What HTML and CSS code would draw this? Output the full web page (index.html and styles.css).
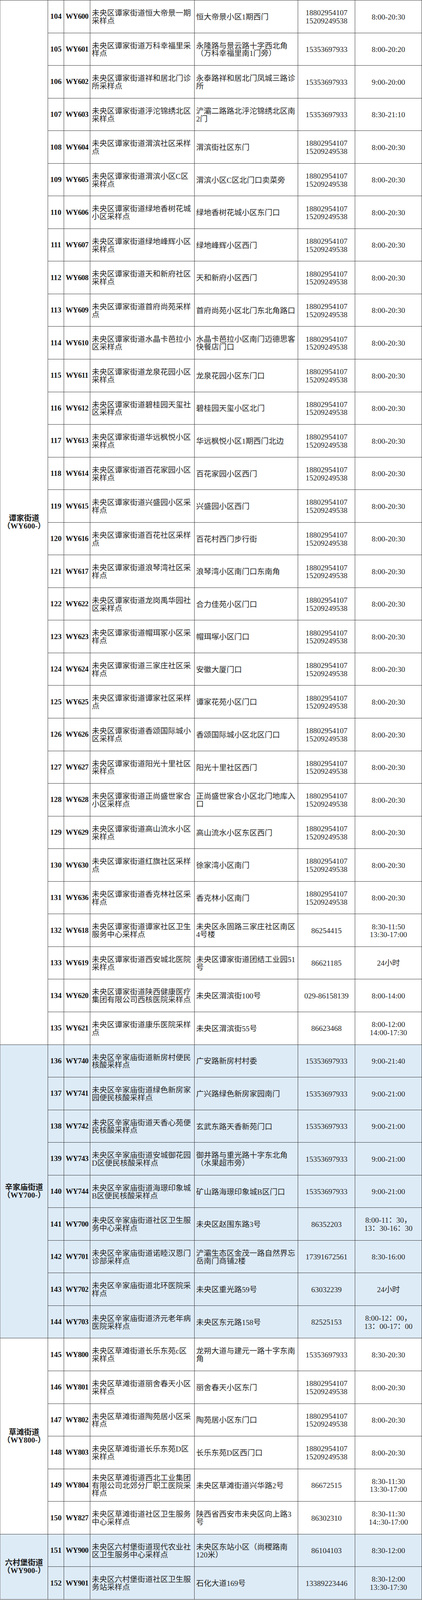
FILE: index.html
```html
<!DOCTYPE html>
<html lang="zh-CN">
<head>
<meta charset="utf-8">
<meta name="viewport" content="width=device-width, initial-scale=1">
<title>未央区核酸采样点</title>
<link rel="stylesheet" href="styles.css">
</head>
<body>
<div class="sheet">
<div class="grp">
<div class="street s32">谭家街道<br>（WY600-）</div>
<div class="row"><div class="no">104</div><div class="code">WY600</div><div class="txt">未央区谭家街道恒大帝景一期采样点</div><div class="txt">恒大帝景小区1期西门</div><div class="tel">18802954107<br>15209249538</div><div class="time">8:00-20:30</div></div>
<div class="row"><div class="no">105</div><div class="code">WY601</div><div class="txt">未央区谭家街道万科幸福里采样点</div><div class="txt">永隆路与景云路十字西北角（万科幸福里南1门旁）</div><div class="tel">15353697933</div><div class="time">8:00-20:20</div></div>
<div class="row"><div class="no">106</div><div class="code">WY602</div><div class="txt">未央区谭家街道祥和居北门诊所采样点</div><div class="txt">永泰路祥和居北门凤城三路诊所</div><div class="tel">15353697933</div><div class="time">9:00-20:00</div></div>
<div class="row"><div class="no">107</div><div class="code">WY603</div><div class="txt">未央区谭家街道泘沱锦绣北区采样点</div><div class="txt">浐灞二路路北泘沱锦绣北区南2门</div><div class="tel">15353697933</div><div class="time">8:30-21:10</div></div>
<div class="row"><div class="no">108</div><div class="code">WY604</div><div class="txt">未央区谭家街道渭滨社区采样点</div><div class="txt">渭滨街社区东门</div><div class="tel">18802954107<br>15209249538</div><div class="time">8:00-20:30</div></div>
<div class="row"><div class="no">109</div><div class="code">WY605</div><div class="txt">未央区谭家街道渭滨小区C区采样点</div><div class="txt">渭滨小区C区北门口卖菜旁</div><div class="tel">18802954107<br>15209249538</div><div class="time">8:00-20:30</div></div>
<div class="row"><div class="no">110</div><div class="code">WY606</div><div class="txt">未央区谭家街道绿地香树花城小区采样点</div><div class="txt">绿地香树花城小区东门口</div><div class="tel">18802954107<br>15209249538</div><div class="time">8:00-20:30</div></div>
<div class="row"><div class="no">111</div><div class="code">WY607</div><div class="txt">未央区谭家街道绿地峰辉小区采样点</div><div class="txt">绿地峰辉小区西门</div><div class="tel">18802954107<br>15209249538</div><div class="time">8:00-20:30</div></div>
<div class="row"><div class="no">112</div><div class="code">WY608</div><div class="txt">未央区谭家街道天和新府社区采样点</div><div class="txt">天和新府小区西门</div><div class="tel">18802954107<br>15209249538</div><div class="time">8:00-20:30</div></div>
<div class="row"><div class="no">113</div><div class="code">WY609</div><div class="txt">未央区谭家街道首府尚苑采样点</div><div class="txt">首府尚苑小区北门东北角路口</div><div class="tel">18802954107<br>15209249538</div><div class="time">8:00-20:30</div></div>
<div class="row"><div class="no">114</div><div class="code">WY610</div><div class="txt">未央区谭家街道水晶卡芭拉小区采样点</div><div class="txt">水晶卡芭拉小区南门迈德思客快餐店门口</div><div class="tel">18802954107<br>15209249538</div><div class="time">8:00-20:30</div></div>
<div class="row"><div class="no">115</div><div class="code">WY611</div><div class="txt">未央区谭家街道龙泉花园小区采样点</div><div class="txt">龙泉花园小区东门口</div><div class="tel">18802954107<br>15209249538</div><div class="time">8:00-20:30</div></div>
<div class="row"><div class="no">116</div><div class="code">WY612</div><div class="txt">未央区谭家街道碧桂园天玺社区采样点</div><div class="txt">碧桂园天玺小区北门</div><div class="tel">18802954107<br>15209249538</div><div class="time">8:00-20:30</div></div>
<div class="row"><div class="no">117</div><div class="code">WY613</div><div class="txt">未央区谭家街道华远枫悦小区采样点</div><div class="txt">华远枫悦小区1期西门北边</div><div class="tel">18802954107<br>15209249538</div><div class="time">8:00-20:30</div></div>
<div class="row"><div class="no">118</div><div class="code">WY614</div><div class="txt">未央区谭家街道百花家园小区采样点</div><div class="txt">百花家园小区西门</div><div class="tel">18802954107<br>15209249538</div><div class="time">8:00-20:30</div></div>
<div class="row"><div class="no">119</div><div class="code">WY615</div><div class="txt">未央区谭家街道兴盛园小区采样点</div><div class="txt">兴盛园小区西门</div><div class="tel">18802954107<br>15209249538</div><div class="time">8:00-20:30</div></div>
<div class="row"><div class="no">120</div><div class="code">WY616</div><div class="txt">未央区谭家街道百花社区采样点</div><div class="txt">百花村西门步行街</div><div class="tel">18802954107<br>15209249538</div><div class="time">8:00-20:30</div></div>
<div class="row"><div class="no">121</div><div class="code">WY617</div><div class="txt">未央区谭家街道浪琴湾社区采样点</div><div class="txt">浪琴湾小区南门口东南角</div><div class="tel">18802954107<br>15209249538</div><div class="time">8:00-20:30</div></div>
<div class="row"><div class="no">122</div><div class="code">WY622</div><div class="txt">未央区谭家街道龙岗禹华园社区采样点</div><div class="txt">合力佳苑小区门口</div><div class="tel">18802954107<br>15209249538</div><div class="time">8:00-20:30</div></div>
<div class="row"><div class="no">123</div><div class="code">WY623</div><div class="txt">未央区谭家街道帽珥冢小区采样点</div><div class="txt">帽珥塚小区门口</div><div class="tel">18802954107<br>15209249538</div><div class="time">8:00-20:30</div></div>
<div class="row"><div class="no">124</div><div class="code">WY624</div><div class="txt">未央区谭家街道三家庄社区采样点</div><div class="txt">安徽大厦门口</div><div class="tel">18802954107<br>15209249538</div><div class="time">8:00-20:30</div></div>
<div class="row"><div class="no">125</div><div class="code">WY625</div><div class="txt">未央区谭家街道谭家社区采样点</div><div class="txt">谭家花苑小区门口</div><div class="tel">18802954107<br>15209249538</div><div class="time">8:00-20:30</div></div>
<div class="row"><div class="no">126</div><div class="code">WY626</div><div class="txt">未央区谭家街道香颂国际城小区采样点</div><div class="txt">香颂国际城小区北区门口</div><div class="tel">18802954107<br>15209249538</div><div class="time">8:00-20:30</div></div>
<div class="row"><div class="no">127</div><div class="code">WY627</div><div class="txt">未央区谭家街道阳光十里社区采样点</div><div class="txt">阳光十里社区西门</div><div class="tel">18802954107<br>15209249538</div><div class="time">8:00-20:30</div></div>
<div class="row"><div class="no">128</div><div class="code">WY628</div><div class="txt">未央区谭家街道正尚盛世家合小区采样点</div><div class="txt">正尚盛世家合小区北门地库入口</div><div class="tel">18802954107<br>15209249538</div><div class="time">8:00-20:30</div></div>
<div class="row"><div class="no">129</div><div class="code">WY629</div><div class="txt">未央区谭家街道高山流水小区采样点</div><div class="txt">高山流水小区东区西门</div><div class="tel">18802954107<br>15209249538</div><div class="time">8:00-20:30</div></div>
<div class="row"><div class="no">130</div><div class="code">WY630</div><div class="txt">未央区谭家街道红旗社区采样点</div><div class="txt">徐家湾小区南门</div><div class="tel">18802954107<br>15209249538</div><div class="time">8:00-20:30</div></div>
<div class="row"><div class="no">131</div><div class="code">WY636</div><div class="txt">未央区谭家街道香克林社区采样点</div><div class="txt">香克林小区南门</div><div class="tel">18802954107<br>15209249538</div><div class="time">8:00-20:30</div></div>
<div class="row"><div class="no">132</div><div class="code">WY618</div><div class="txt">未央区谭家街道谭家社区卫生服务中心采样点</div><div class="txt">未央区永固路三家庄社区南区4号楼</div><div class="tel">86254415</div><div class="time">8:30-11:50<br>13:30-17:00</div></div>
<div class="row"><div class="no">133</div><div class="code">WY619</div><div class="txt">未央区谭家街道西安城北医院采样点</div><div class="txt">未央区谭家街道团结工业园51号</div><div class="tel">86621185</div><div class="time">24小时</div></div>
<div class="row"><div class="no">134</div><div class="code">WY620</div><div class="txt">未央区谭家街道陕西健康医疗集团有限公司西核医院采样点</div><div class="txt">未央区渭滨街100号</div><div class="tel">029-86158139</div><div class="time">8:00-14:00</div></div>
<div class="row"><div class="no">135</div><div class="code">WY621</div><div class="txt">未央区谭家街道康乐医院采样点</div><div class="txt">未央区渭滨街55号</div><div class="tel">86623468</div><div class="time">8:00-12:00<br>14:00-17:30</div></div>
</div>
<div class="grp blue">
<div class="street s9">辛家庙街道<br>（WY700-）</div>
<div class="row"><div class="no">136</div><div class="code">WY740</div><div class="txt">未央区辛家庙街道新房村便民核酸采样点</div><div class="txt">广安路新房村村委</div><div class="tel">15353697933</div><div class="time">9:00-21:40</div></div>
<div class="row"><div class="no">137</div><div class="code">WY741</div><div class="txt">未央区辛家庙街道绿色新房家园便民核酸采样点</div><div class="txt">广兴路绿色新房家园南门</div><div class="tel">15353697933</div><div class="time">9:00-21:00</div></div>
<div class="row"><div class="no">138</div><div class="code">WY742</div><div class="txt">未央区辛家庙街道天香心苑便民核酸采样点</div><div class="txt">玄武东路天香新苑门口</div><div class="tel">15353697933</div><div class="time">9:00-21:00</div></div>
<div class="row"><div class="no">139</div><div class="code">WY743</div><div class="txt">未央区辛家庙街道安城御花园D区便民核酸采样点</div><div class="txt">御井路与重光路十字东北角（水果超市旁）</div><div class="tel">15353697933</div><div class="time">9:00-21:00</div></div>
<div class="row"><div class="no">140</div><div class="code">WY744</div><div class="txt">未央区辛家庙街道海璟印象城B区便民核酸采样点</div><div class="txt">矿山路海璟印象城B区门口</div><div class="tel">15353697933</div><div class="time">9:00-21:00</div></div>
<div class="row"><div class="no">141</div><div class="code">WY700</div><div class="txt">未央区辛家庙街道社区卫生服务中心采样点</div><div class="txt">未央区赵围东路3号</div><div class="tel">86352203</div><div class="time">8:00-11：30，<br>13：30-16：30</div></div>
<div class="row"><div class="no">142</div><div class="code">WY701</div><div class="txt">未央区辛家庙街道诺睦汉恩门诊部采样点</div><div class="txt">浐灞生态区金茂一路自然界忘岳南门商铺2楼</div><div class="tel">17391672561</div><div class="time">8:30-16:00</div></div>
<div class="row"><div class="no">143</div><div class="code">WY702</div><div class="txt">未央区辛家庙街道北环医院采样点</div><div class="txt">未央区重光路59号</div><div class="tel">63032239</div><div class="time">24小时</div></div>
<div class="row"><div class="no">144</div><div class="code">WY703</div><div class="txt">未央区辛家庙街道济元老年病医院采样点</div><div class="txt">未央区东元路158号</div><div class="tel">82525153</div><div class="time">8:00-12：00，<br>13：00-17：00</div></div>
</div>
<div class="grp">
<div class="street s6">草滩街道<br>（WY800-）</div>
<div class="row"><div class="no">145</div><div class="code">WY800</div><div class="txt">未央区草滩街道长乐东苑c区采样点</div><div class="txt">龙朔大道与建元一路十字东南角</div><div class="tel">15353697933</div><div class="time">8:30-20:30</div></div>
<div class="row"><div class="no">146</div><div class="code">WY801</div><div class="txt">未央区草滩街道丽舍春天小区采样点</div><div class="txt">丽舍春天小区东门</div><div class="tel">18802954107<br>15209249538</div><div class="time">8:00-20:30</div></div>
<div class="row"><div class="no">147</div><div class="code">WY802</div><div class="txt">未央区草滩街道陶苑居小区采样点</div><div class="txt">陶苑居小区东门口</div><div class="tel">18802954107<br>15209249538</div><div class="time">8:00-20:30</div></div>
<div class="row"><div class="no">148</div><div class="code">WY803</div><div class="txt">未央区草滩街道长乐东苑D区采样点</div><div class="txt">长乐东苑D区西门口</div><div class="tel">18802954107<br>15209249538</div><div class="time">8:00-20:30</div></div>
<div class="row"><div class="no">149</div><div class="code">WY804</div><div class="txt">未央区草滩街道西北工业集团有限公司北郊分厂职工医院采样点</div><div class="txt">未央区草滩街道兴华路2号</div><div class="tel">86672515</div><div class="time">8:30-11:30<br>13:30-17:00</div></div>
<div class="row"><div class="no">150</div><div class="code">WY827</div><div class="txt">未央区草滩街道社区卫生服务中心采样点</div><div class="txt">陕西省西安市未央区向上路3号</div><div class="tel">86302310</div><div class="time">8:30-11:30<br>14::30-17:00</div></div>
</div>
<div class="grp blue">
<div class="street s2">六村堡街道<br>（WY900-）</div>
<div class="row"><div class="no">151</div><div class="code">WY900</div><div class="txt">未央区六村堡街道现代农业社区卫生服务中心采样点</div><div class="txt">未央区东站小区（尚稷路南120米）</div><div class="tel">86104103</div><div class="time">8:30-12:00</div></div>
<div class="row"><div class="no">152</div><div class="code">WY901</div><div class="txt">未央区六村堡街道社区卫生服务站采样点</div><div class="txt">石化大道169号</div><div class="tel">13389223446</div><div class="time">8:30-12:00<br>13:30-17:30</div></div>
</div>
</div>
</body>
</html>
```
FILE: styles.css
```css
:root {
  /* the 49 rows share the window height, never taller than 105.2px */
  --row: clamp(60px, calc((100vh - 2px) / 49), 105.2px);
}

html, body {
  margin: 0;
  padding: 0;
  background: #ffffff;
}

.sheet {
  width: 100%;
  display: grid;
  grid-template-columns: 123fr 41fr 67fr 267fr 265fr 146fr 171fr;
  grid-auto-rows: var(--row);
  border-top: 1px solid #3a3a3a;
  font-family: "Liberation Serif", "Noto Sans CJK SC", serif;
  font-size: 19.5px;
  line-height: calc(var(--row) * 0.2376);
  color: #262626;
}

.grp,
.row {
  display: contents;
}

.sheet .street,
.row > div {
  box-sizing: border-box;
  border-right: 1px solid #3a3a3a;
  border-bottom: 1px solid #3a3a3a;
  display: flex;
  align-items: center;
  min-width: 0;
  overflow: hidden;
}

.blue .street,
.blue .row > div {
  background: #ddebf7;
}

.street {
  grid-column: 1;
  border-left: 1px solid #8a8a8a;
  justify-content: center;
  text-align: center;
  font-weight: bold;
  color: #1a1a1a;
}

.s32 { grid-row: span 32; }
.s9 { grid-row: span 9; }
.s6 { grid-row: span 6; }
.s2 { grid-row: span 2; }

.no {
  justify-content: center;
  font-weight: bold;
  color: #111;
}

.code {
  justify-content: center;
  font-weight: bold;
  font-size: 19px;
  letter-spacing: -0.6px;
  color: #111;
  white-space: nowrap;
}

.txt {
  justify-content: flex-start;
  padding-left: 4px;
  padding-top: calc(var(--row) * 0.038);
}

.tel,
.time {
  justify-content: center;
  text-align: center;
  line-height: calc(var(--row) * 0.247);
  padding-top: calc(var(--row) * 0.038);
}
```
